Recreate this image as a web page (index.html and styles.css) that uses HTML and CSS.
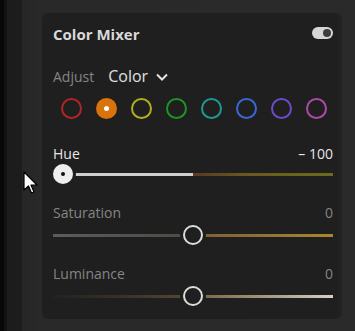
FILE: index.html
```html
<!DOCTYPE html>
<html lang="en">
<head>
    <meta charset="UTF-8">
    <meta name="viewport" content="width=device-width, initial-scale=1.0">
    <title>Color Mixer</title>
    <link rel="stylesheet" href="styles.css">
</head>
<body>
    <div class="app">
        <div class="edge edge-a"></div>
        <div class="edge edge-b"></div>
        <div class="edge edge-c"></div>
        <div class="workspace">
            <div class="panel">
                <div class="panel-header">
                    <span class="panel-title">Color Mixer</span>
                    <span class="toggle"><span class="toggle-knob"></span></span>
                </div>

                <div class="adjust-row">
                    <span class="adjust-label">Adjust</span>
                    <span class="adjust-value">Color</span>
                    <svg class="chevron" width="12" height="8" viewBox="0 0 12 8">
                        <polyline points="1,1.5 6,6.5 11,1.5" fill="none" stroke="#e2e2e2" stroke-width="2"/>
                    </svg>
                </div>

                <div class="swatches">
                    <span class="swatch red"></span>
                    <span class="swatch orange active"></span>
                    <span class="swatch yellow"></span>
                    <span class="swatch green"></span>
                    <span class="swatch aqua"></span>
                    <span class="swatch blue"></span>
                    <span class="swatch purple"></span>
                    <span class="swatch magenta"></span>
                </div>

                <div class="slider-label hue-label">
                    <span>Hue</span>
                    <span>&ndash; 100</span>
                </div>
                <div class="slider hue-slider">
                    <div class="track">
                        <span class="seg hue-left"></span>
                        <span class="seg hue-right"></span>
                    </div>
                    <span class="thumb thumb-filled" style="left: 0%"></span>
                </div>

                <div class="slider-label dim">
                    <span>Saturation</span>
                    <span>0</span>
                </div>
                <div class="slider low">
                    <div class="track">
                        <span class="seg sat-left"></span>
                        <span class="seg sat-right"></span>
                    </div>
                    <span class="thumb centered" style="left: 50%"></span>
                </div>

                <div class="slider-label dim">
                    <span>Luminance</span>
                    <span>0</span>
                </div>
                <div class="slider low">
                    <div class="track">
                        <span class="seg lum-left"></span>
                        <span class="seg lum-right"></span>
                    </div>
                    <span class="thumb centered" style="left: 50%"></span>
                </div>
            </div>
        </div>

        <svg class="cursor" width="16" height="24" viewBox="0 0 16 24">
            <path d="M1 1 V19 L5.5 15 L8.5 22 L11 21 L8 14 H14 Z" fill="#ffffff" stroke="#000000" stroke-width="1.2" stroke-linejoin="round"/>
        </svg>
    </div>
</body>
</html>
```

FILE: styles.css
```css
* {
    box-sizing: border-box;
}
body {
    margin: 0;
    background: #292929;
    font-family: "Open Sans", "Noto Sans", sans-serif;
}
.app {
    position: relative;
    display: flex;
    width: 355px;
    height: 331px;
    overflow: hidden;
}
.edge { height: 100%; }
.edge-a { width: 4px; background: #070707; }
.edge-b { width: 3px; background: #121212; }
.edge-c { width: 15px; background: #1c1c1c; }
.workspace {
    flex: 1;
    padding: 13px 16px 12px 20px;
    background: linear-gradient(to right, #262626 0, #292929 20px, #2a2a2a 100%);
}
.panel {
    display: flex;
    flex-direction: column;
    width: 297px;
    height: 306px;
    padding: 10px 6px 0 11px;
    background: #1f1f1f;
    border-radius: 6px;
    box-shadow: 3px 0 0 #222222;
}
.panel-header {
    display: flex;
    align-items: center;
    justify-content: space-between;
    height: 22px;
}
.panel-title {
    font-weight: 700;
    font-size: 15px;
    color: #d9d9d9;
}
.toggle {
    display: flex;
    align-items: center;
    justify-content: flex-end;
    width: 21px;
    height: 12px;
    padding: 0 2px;
    margin-top: -2px;
    border-radius: 6px;
    background: #d6d6d6;
}
.toggle-knob {
    width: 8px;
    height: 8px;
    border-radius: 50%;
    background: #3c3c3c;
}
.adjust-row {
    display: flex;
    align-items: center;
    height: 22px;
    margin-top: 20px;
}
.adjust-label {
    font-size: 14px;
    color: #858585;
}
.adjust-value {
    margin-left: 14px;
    font-size: 16px;
    color: #e0e0e0;
}
.chevron {
    margin-left: 8px;
    margin-top: 1px;
}
.swatches {
    display: flex;
    align-items: center;
    gap: 14px;
    height: 22px;
    margin-top: 10px;
    padding-left: 8px;
}
.swatch {
    display: flex;
    align-items: center;
    justify-content: center;
    width: 21px;
    height: 21px;
    border-radius: 50%;
    border: 2px solid;
}
.red { border-color: #b02525; }
.orange { border-color: #d9730c; }
.yellow { border-color: #b3ae1f; }
.green { border-color: #1d9328; }
.aqua { border-color: #1e9893; }
.blue { border-color: #3a66d6; }
.purple { border-color: #6c4acb; }
.magenta { border-color: #ad4aa6; }
.swatch.active {
    background: #d9730c;
}
.swatch.active::after {
    content: "";
    width: 5px;
    height: 5px;
    border-radius: 50%;
    background: #ffffff;
}
.slider-label {
    display: flex;
    justify-content: space-between;
    align-items: center;
    height: 18px;
    font-size: 14px;
    color: #e6e6e6;
    margin-top: 19px;
}
.hue-label {
    margin-top: 25px;
}
.slider-label.dim {
    color: #858585;
}
.slider {
    position: relative;
    height: 20px;
    margin-top: 2px;
    display: flex;
    align-items: center;
}
.slider.low {
    margin-top: 4px;
}
.track {
    display: flex;
    width: 100%;
    height: 3px;
}
.seg {
    flex: 1;
    height: 100%;
}
.hue-left { background: #cfcfcf; }
.hue-right { background: linear-gradient(to right, #5a3a22, #6a5a1e 40%, #6b6b1c); }
.sat-left { background: linear-gradient(to right, #5c5c5c, #4e4a44); }
.sat-right { background: linear-gradient(to right, #7e5c38, #9a7a34 70%, #ab862a); }
.lum-left { background: linear-gradient(to right, #222222, #3a3128 50%, #5a4a36); }
.lum-right { background: linear-gradient(to right, #72623f, #aca08a 60%, #d6d0c8); }
.thumb {
    position: absolute;
    top: 0;
    width: 20px;
    height: 20px;
    border-radius: 50%;
    border: 2px solid #dcdcdc;
    background: #1f1f1f;
    box-shadow: 0 0 0 3px #1f1f1f;
}
.thumb.centered {
    margin-left: -10px;
}
.thumb-filled {
    display: flex;
    align-items: center;
    justify-content: center;
    background: #eeeeee;
    border-color: #eeeeee;
}
.thumb-filled::after {
    content: "";
    width: 4px;
    height: 4px;
    border-radius: 50%;
    background: #111111;
}
.cursor {
    position: absolute;
    left: 23px;
    top: 171px;
}
```
